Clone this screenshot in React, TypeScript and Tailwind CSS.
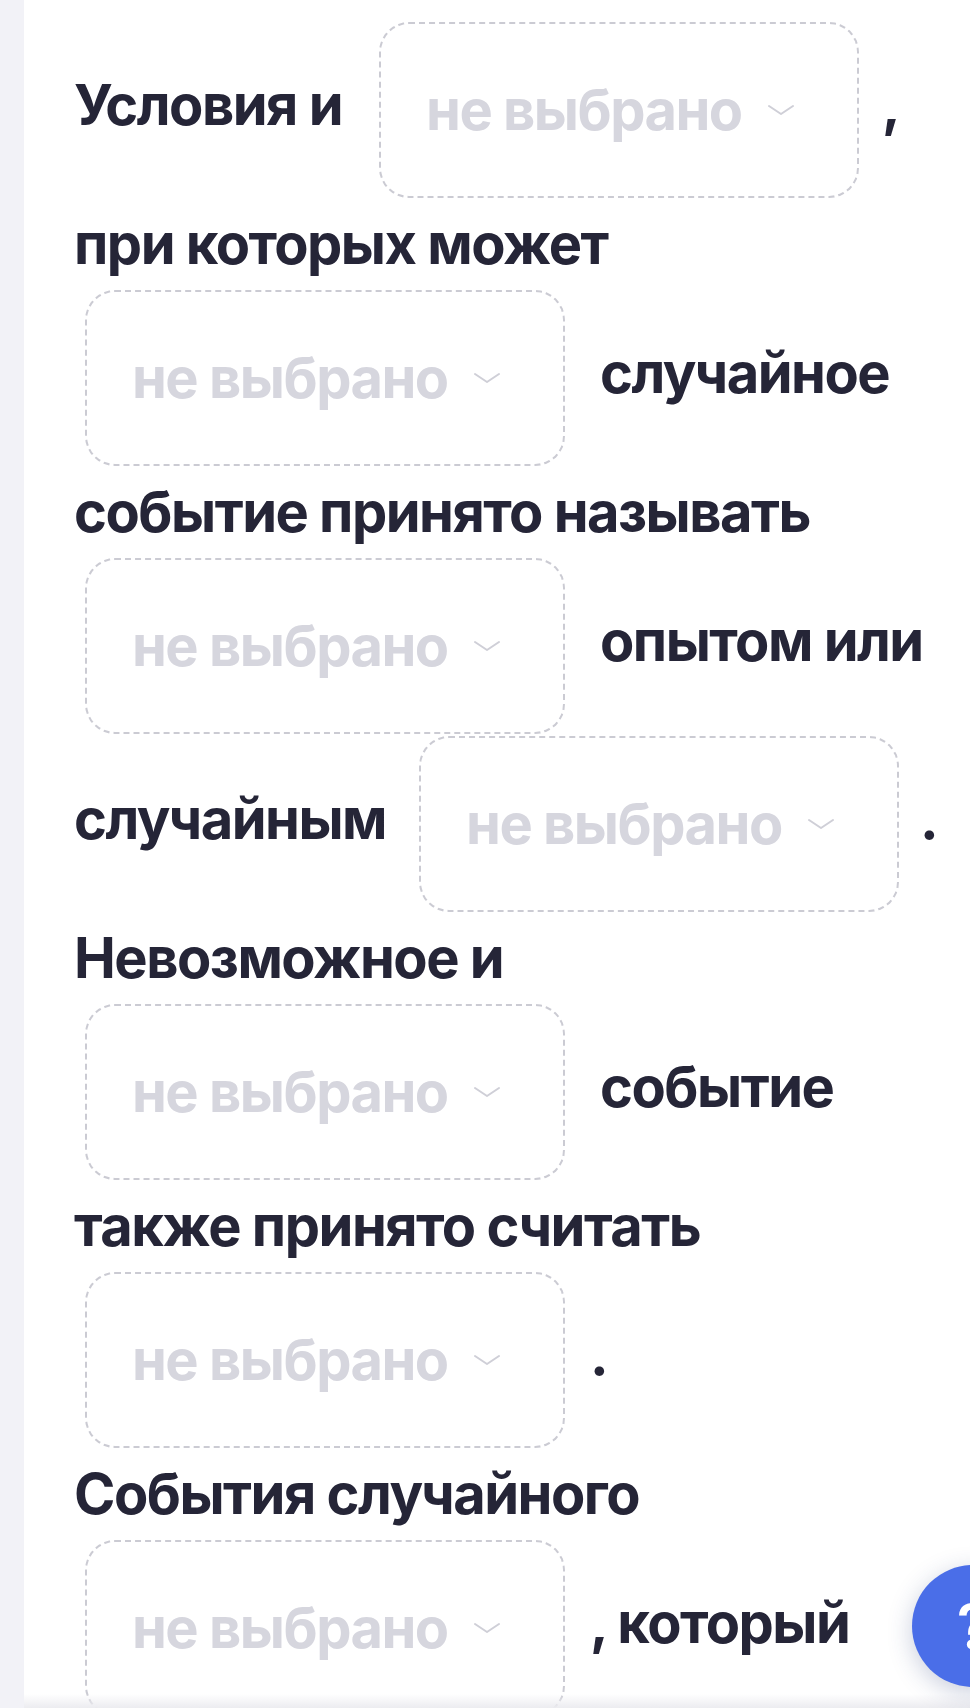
import React from "react";

// Dashed "select" blank that sits inside a sentence
function Blank() {
  return (
    <span className="mx-[11px] my-px inline-flex h-[176px] w-[480px] items-center rounded-[30px] border-2 border-dashed border-[#cbcbd3] pl-[45px] align-middle">
      <span className="text-[#d6d6de]">не выбрано</span>
      <svg
        className="ml-[25px]"
        width="28"
        height="12"
        viewBox="0 0 28 12"
        fill="none"
        stroke="#cfcfd7"
        strokeWidth="2"
        strokeLinecap="round"
        strokeLinejoin="round"
      >
        <path d="M2 2l12 8 12-8" />
      </svg>
    </span>
  );
}

// blank glued to the punctuation mark right after it
function BlankThen({ mark, gap }: { mark: string; gap: string }) {
  return (
    <span className="whitespace-nowrap">
      <Blank />
      <span className={gap}>{mark}</span>
    </span>
  );
}

export default function App() {
  return (
    <div
      className="relative flex h-[1708px] overflow-hidden bg-white"
      style={{ fontFamily: "Inter, 'Noto Sans', sans-serif" }}
    >
      {/* left rail */}
      <div className="w-6 shrink-0 bg-[#f2f2f7]" />

      <div className="flex-1 pl-[50px] pr-[14px] pt-[21px] text-[56px] font-bold leading-[90px] tracking-[-1.5px] text-[#252537]">
        <p>
          <span className="mr-[26px]">Условия и</span>
          <BlankThen mark="," gap="ml-[12px]" />
          <span> при которых может</span>
          <Blank />
          <span className="ml-[24px]">случайное событие принято называть</span>
          <Blank />
          <span className="ml-[24px] mr-[22px]">опытом или случайным</span>
          <BlankThen mark="." gap="ml-[10px]" />
        </p>
        <p>
          <span>Невозможное и</span>
          <Blank />
          <span className="ml-[24px]">событие также принято считать</span>
          <BlankThen mark="." gap="ml-[14px]" />
        </p>
        <p>
          <span>События случайного</span>
          <BlankThen mark="," gap="ml-[14px]" />
          <span> который</span>
        </p>
      </div>

      {/* bottom bar shadow */}
      <div className="pointer-events-none absolute bottom-0 left-6 right-0 h-[14px] bg-linear-to-b from-white/0 to-[#ececf0]" />

      {/* help button */}
      <button className="absolute bottom-[21px] right-[-64px] flex h-[122px] w-[122px] items-center justify-center rounded-full bg-[#4a6ee8] text-[60px] font-semibold text-white shadow-[0_6px_24px_rgba(40,60,120,0.25)]">
        ?
      </button>
    </div>
  );
}
